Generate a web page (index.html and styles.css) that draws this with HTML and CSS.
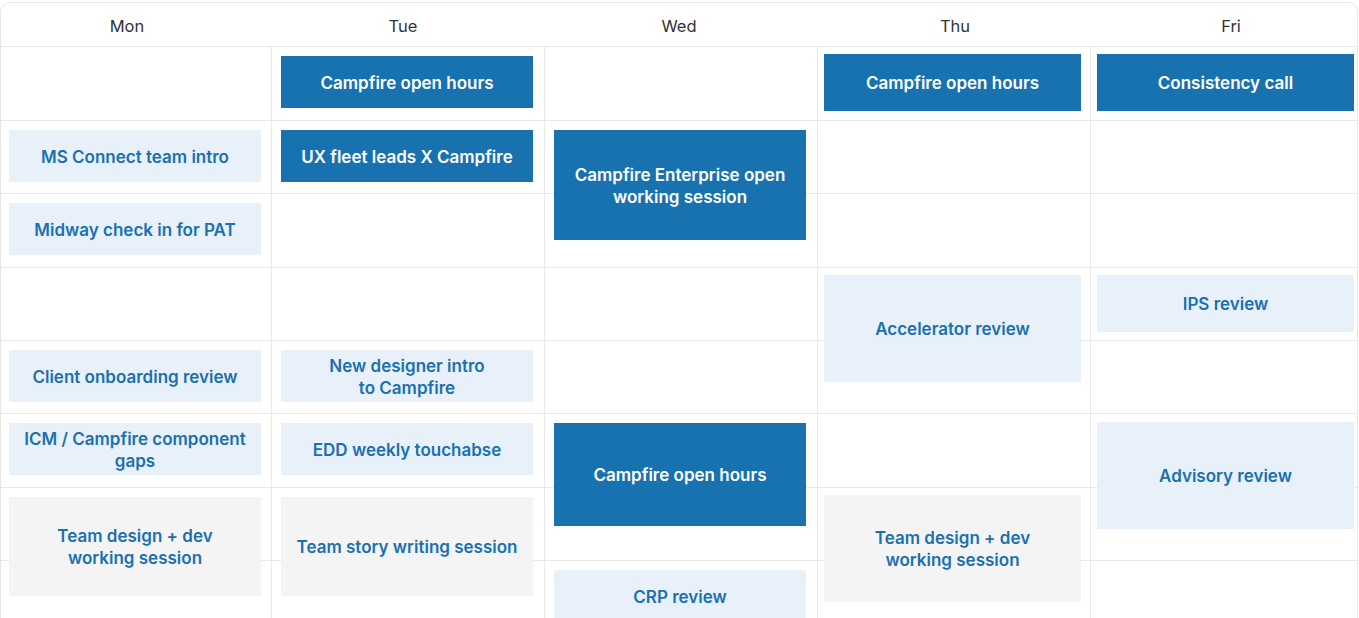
FILE: index.html
```html
<!DOCTYPE html>
<html lang="en">
<head>
<meta charset="utf-8">
<title>Week schedule</title>
<link rel="stylesheet" href="styles.css">
</head>
<body>
<div class="calendar">
  <div class="cal-head">
    <div class="day-name">Mon</div>
    <div class="day-name">Tue</div>
    <div class="day-name">Wed</div>
    <div class="day-name">Thu</div>
    <div class="day-name">Fri</div>
  </div>
  <div class="cal-body">
    <div class="day day--mon">
      <div class="lines"><div class="slot"></div><div class="slot"></div><div class="slot"></div><div class="slot"></div><div class="slot"></div><div class="slot"></div><div class="slot"></div><div class="slot"></div></div>
      <div class="events">
        <div class="event event--light" style="grid-row:2;height:52px">MS Connect team intro</div>
        <div class="event event--light" style="grid-row:3;height:52px">Midway check in for PAT</div>
        <div class="event event--light" style="grid-row:5;height:52px">Client onboarding review</div>
        <div class="event event--light" style="grid-row:6;height:52px">ICM / Campfire component<br>gaps</div>
        <div class="event event--gray" style="grid-row:7;height:99px">Team design + dev<br>working session</div>
      </div>
    </div>
    <div class="day day--std">
      <div class="lines"><div class="slot"></div><div class="slot"></div><div class="slot"></div><div class="slot"></div><div class="slot"></div><div class="slot"></div><div class="slot"></div><div class="slot"></div></div>
      <div class="events">
        <div class="event event--dark" style="grid-row:1;height:52px">Campfire open hours</div>
        <div class="event event--dark" style="grid-row:2;height:52px">UX fleet leads X Campfire</div>
        <div class="event event--light" style="grid-row:5;height:52px">New designer intro<br>to Campfire</div>
        <div class="event event--light" style="grid-row:6;height:52px">EDD weekly touchabse</div>
        <div class="event event--gray" style="grid-row:7;height:99px">Team story writing session</div>
      </div>
    </div>
    <div class="day day--std">
      <div class="lines"><div class="slot"></div><div class="slot"></div><div class="slot"></div><div class="slot"></div><div class="slot"></div><div class="slot"></div><div class="slot"></div><div class="slot"></div></div>
      <div class="events">
        <div class="event event--dark" style="grid-row:2;height:110px">Campfire Enterprise open<br>working session</div>
        <div class="event event--dark" style="grid-row:6;height:103px">Campfire open hours</div>
        <div class="event event--light" style="grid-row:8;height:52px">CRP review</div>
      </div>
    </div>
    <div class="day day--alt">
      <div class="lines"><div class="slot"></div><div class="slot"></div><div class="slot"></div><div class="slot"></div><div class="slot"></div><div class="slot"></div><div class="slot"></div><div class="slot"></div></div>
      <div class="events">
        <div class="event event--dark" style="grid-row:1;height:57px">Campfire open hours</div>
        <div class="event event--light" style="grid-row:4;height:107px">Accelerator review</div>
        <div class="event event--gray" style="grid-row:7;height:107px">Team design + dev<br>working session</div>
      </div>
    </div>
    <div class="day day--alt">
      <div class="lines"><div class="slot"></div><div class="slot"></div><div class="slot"></div><div class="slot"></div><div class="slot"></div><div class="slot"></div><div class="slot"></div><div class="slot"></div></div>
      <div class="events">
        <div class="event event--dark" style="grid-row:1;height:57px">Consistency call</div>
        <div class="event event--light" style="grid-row:4;height:57px">IPS review</div>
        <div class="event event--light event--early" style="grid-row:6;height:107px">Advisory review</div>
      </div>
    </div>
  </div>
</div>
</body>
</html>
```

FILE: styles.css
```css
* { box-sizing: border-box; }

html, body {
  margin: 0;
  height: 618px;
  overflow: hidden;
  background: #ffffff;
  font-family: Inter, "Noto Sans", "Liberation Sans", sans-serif;
}

.calendar {
  --rows: 74px 73px 74px 73px 73px 74px 73px 74px;
  width: 1358px;
  height: 700px;
  margin-top: 2px;
  border: 1px solid #e6e6e6;
  border-radius: 10px;
  overflow: hidden;
  background: #fff;
}

.cal-head {
  display: grid;
  grid-template-columns: repeat(5, 276px);
  margin-left: -12px;
  height: 44px;
  border-bottom: 1px solid #e8e8e8;
}

.day-name {
  display: flex;
  align-items: center;
  justify-content: center;
  font-size: 16.5px;
  font-weight: 400;
  color: #333333;
  padding-top: 3px;
}

.cal-body {
  display: grid;
  grid-template-columns: 270px 273px 273px 273px 1fr;
}

.day {
  display: grid;
}

.day + .day {
  border-left: 1px solid #e8e8e8;
}

.lines,
.events {
  grid-area: 1 / 1;
  display: grid;
  grid-template-rows: var(--rows);
}

.slot {
  border-bottom: 1px solid #e8e8e8;
}

.event {
  grid-column: 1;
  align-self: start;
  display: flex;
  align-items: center;
  justify-content: center;
  text-align: center;
  padding: 1px 6px 0;
  font-size: 17px;
  font-weight: 600;
  line-height: 22px;
  letter-spacing: 0;
}

.day--mon .event { margin: 9px 0 0 8px; width: 252px; }
.day--std .event { margin: 9px 0 0 9px; width: 252px; }
.day--alt .event { margin: 7px 0 0 6px; width: 257px; }
.day--alt .event--early { margin-top: 8px; }

.event--dark {
  background: #1872b0;
  color: #ffffff;
}

.event--light {
  background: #e8f1f9;
  color: #1b70b0;
}

.event--gray {
  background: #f4f4f4;
  color: #1b70b0;
}
```
